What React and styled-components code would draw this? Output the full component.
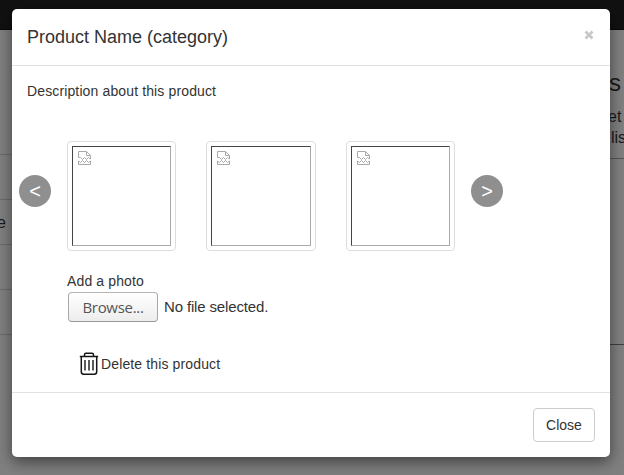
import React from "react";
import styled, { createGlobalStyle } from "styled-components";

const GlobalStyle = createGlobalStyle`
  * { box-sizing: border-box; }
  body {
    margin: 0;
    overflow: hidden;
    background: #808080;
    color: #333;
    font-family: "Liberation Sans", Arial, sans-serif;
    font-size: 14px;
    line-height: 20px;
  }
`;

const Screen = styled.div`
  position: relative;
  width: 624px;
  height: 475px;
  overflow: hidden;
  display: flex;
  flex-direction: column;
`;

const NavBar = styled.div`
  height: 30px;
  flex: none;
  background: #111;
  border-bottom: 1px solid #080808;
`;

const PageBody = styled.div`
  flex: 1;
  display: flex;
  justify-content: space-between;
`;

const TableColumn = styled.div`
  width: 12px;
  padding-top: 80px;
`;

const TableRow = styled.div`
  height: 45px;
  border-bottom: 1px solid #6b6b6b;
  color: #181818;
  font-size: 16px;
  line-height: 46px;
  text-indent: -3px;
`;

const SideColumn = styled.div`
  width: 16px;
  overflow: hidden;
  white-space: nowrap;
  color: #1a1a1a;
`;

const SideIntro = styled.div`
  height: 129px;
  padding-top: 39px;
  border-bottom: 1px solid #555;
`;

const SideTitle = styled.div`
  font-size: 24px;
  line-height: 28px;
  padding-left: 1px;
  margin-bottom: 9px;
`;

const SideLine = styled.div`
  font-size: 16px;
  line-height: 21px;
  padding-left: ${(p) => p.$indent || 0}px;
`;

const SideDetails = styled.div`
  height: 186px;
  border-bottom: 1px solid #3f3f3f;
`;

const Dialog = styled.section`
  position: absolute;
  left: 12px;
  top: 9px;
  width: 598px;
  height: 448px;
  display: flex;
  flex-direction: column;
  background: #fff;
  border-radius: 5px;
  box-shadow: 0 5px 15px rgba(0, 0, 0, 0.5);
`;

const DialogHeader = styled.header`
  display: flex;
  justify-content: space-between;
  height: 57px;
  padding: 15px;
  border-bottom: 1px solid #e2e2e2;
`;

const Title = styled.h4`
  margin: 0;
  font-size: 18px;
  font-weight: 400;
  line-height: 26px;
`;

const DismissButton = styled.button`
  width: 12px;
  height: 21px;
  padding: 0;
  border: 0;
  background: none;
  display: flex;
  align-items: center;
  justify-content: center;
`;

const DialogBody = styled.div`
  flex: 1;
  padding: 15px;
`;

const Description = styled.p`
  margin: 0 0 40px;
  letter-spacing: 0.13px;
`;

const Carousel = styled.div`
  display: flex;
  align-items: flex-start;
  height: 110px;
  margin-left: -8px;
`;

const ArrowButton = styled.button`
  width: 32px;
  height: 32px;
  margin-top: 34px;
  padding: 0;
  border: 0;
  border-radius: 50%;
  background: #8f8f8f;
  color: #fff;
  font-family: inherit;
  font-size: 20px;
  line-height: 32px;
`;

const Thumbnails = styled.div`
  display: grid;
  grid-template-columns: 109px 110px 109px;
  column-gap: 30px;
  margin: 0 16px;
`;

const Thumbnail = styled.div`
  height: 110px;
  padding: 4px;
  border: 1px solid #ddd;
  border-radius: 4px;
`;

const MissingImage = styled.div`
  height: 100px;
  padding: 4px 5px;
  border: 1px solid;
  border-color: #444 #aaa #aaa #444;

  svg { display: block; }
`;

const PhotoField = styled.div`
  margin: 20px 0 0 40px;
`;

const FieldLabel = styled.label`
  display: block;
  letter-spacing: 0.13px;
`;

const FilePicker = styled.div`
  display: flex;
  align-items: center;
  gap: 6px;
  margin: 1px 0 0 1px;
  font-size: 15px;
`;

const BrowseButton = styled.button`
  width: 90px;
  height: 30px;
  padding: 0;
  border: 1px solid #aaa;
  border-color: #b5b5b5 #a8a8a8 #999;
  border-radius: 4px;
  background: linear-gradient(#fff, #f8f7f7 45%, #eeeded);
  color: #555;
  font-family: "Open Sans", "Noto Sans", sans-serif;
  font-size: 15px;
  letter-spacing: -0.3px;
  line-height: 26px;
`;

const FileStatus = styled.span`
  letter-spacing: -0.15px;
`;

const DeleteAction = styled.div`
  display: flex;
  align-items: center;
  height: 24px;
  gap: 2px;
  margin: 30px 0 0 52px;
  letter-spacing: 0.13px;
`;

const DialogFooter = styled.footer`
  display: flex;
  justify-content: flex-end;
  height: 65px;
  padding: 15px;
  border-top: 1px solid #e2e2e2;
`;

const CloseButton = styled.button`
  width: 62px;
  height: 34px;
  padding: 0;
  border: 1px solid #ccc;
  border-radius: 4px;
  background: #fff;
  color: #333;
  font: inherit;
`;

function CrossIcon() {
  return (
    <svg width="10" height="10" viewBox="0 0 10 10">
      <path d="M1.5 1.5 8.5 8.5M8.5 1.5 1.5 8.5" stroke="#c8c8c8" strokeWidth="2.7" />
    </svg>
  );
}

function BrokenImageIcon() {
  return (
    <svg width="13" height="15" viewBox="0 0 13 15" fill="none" stroke="#aaa">
      <path d="M.5 6.5V.5H8.5L12.5 4.5V8L10.5 6.5 8.5 8.5 6.5 6.5 4.5 8.5 2.5 6.5H.5M8.5 .5V4.5H12.5" />
      <path d="M.5 13.5V10L2.5 11.5 4.5 9.5 6.5 11.5 8.5 9.5 10.5 11.5 12.5 10V13.5Z" />
    </svg>
  );
}

function TrashIcon() {
  return (
    <svg width="20" height="24" viewBox="0 0 20 24" fill="none" stroke="#161616" strokeWidth="1.5">
      <path d="M.8 4.5H19.2M5.5 4V2.7Q5.5 1.2 7 1.2H13Q14.5 1.2 14.5 2.7V4M2.3 5V19.8Q2.3 22.3 4.8 22.3H15.2Q17.7 22.3 17.7 19.8V5" />
      <path d="M6 8V18.5M10 8V18.5M14 8V18.5" strokeWidth="1.4" />
    </svg>
  );
}

const tableRows = ["", "", "e", "", ""];

export default function App() {
  return (
    <>
      <GlobalStyle />
      <Screen>
        <NavBar />
        <PageBody>
          <TableColumn>
            {tableRows.map((text, i) => (
              <TableRow key={i}>{text}</TableRow>
            ))}
          </TableColumn>
          <SideColumn>
            <SideIntro>
              <SideTitle>s</SideTitle>
              <SideLine>et</SideLine>
              <SideLine $indent={3}>lis</SideLine>
            </SideIntro>
            <SideDetails />
          </SideColumn>
        </PageBody>
        <Dialog role="dialog">
          <DialogHeader>
            <Title>Product Name (category)</Title>
            <DismissButton aria-label="Dismiss"><CrossIcon /></DismissButton>
          </DialogHeader>
          <DialogBody>
            <Description>Description about this product</Description>
            <Carousel>
              <ArrowButton>&lt;</ArrowButton>
              <Thumbnails>
                {[0, 1, 2].map((i) => (
                  <Thumbnail key={i}>
                    <MissingImage><BrokenImageIcon /></MissingImage>
                  </Thumbnail>
                ))}
              </Thumbnails>
              <ArrowButton>&gt;</ArrowButton>
            </Carousel>
            <PhotoField>
              <FieldLabel>Add a photo</FieldLabel>
              <FilePicker>
                <BrowseButton>Browse...</BrowseButton>
                <FileStatus>No file selected.</FileStatus>
              </FilePicker>
            </PhotoField>
            <DeleteAction>
              <TrashIcon />
              <span>Delete this product</span>
            </DeleteAction>
          </DialogBody>
          <DialogFooter>
            <CloseButton>Close</CloseButton>
          </DialogFooter>
        </Dialog>
      </Screen>
    </>
  );
}
